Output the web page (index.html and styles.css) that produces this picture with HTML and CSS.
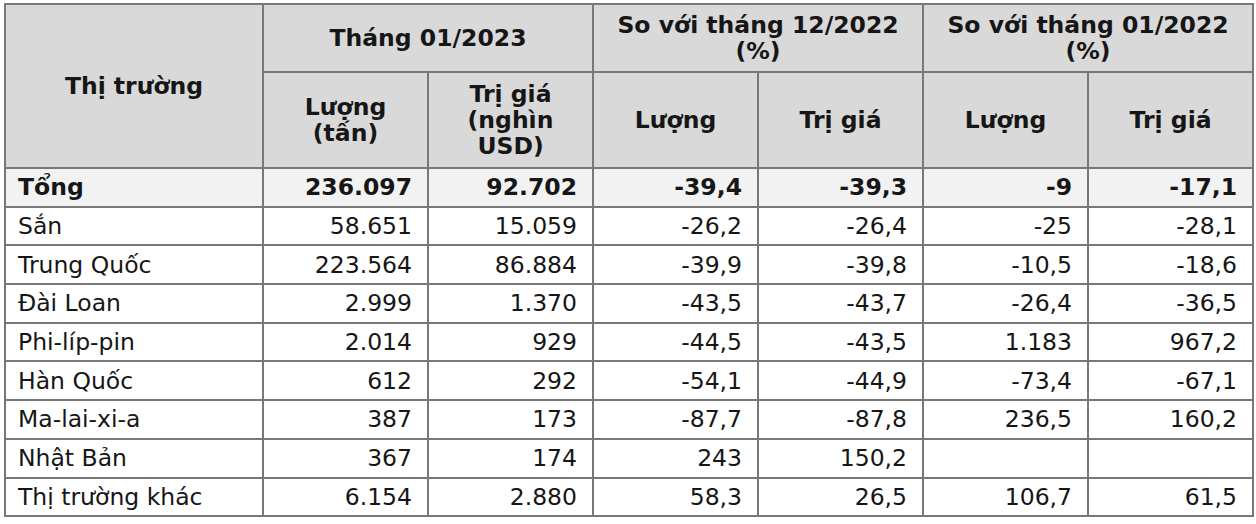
FILE: index.html
```html
<!DOCTYPE html>
<html lang="vi">
<head>
  <meta charset="UTF-8" />
  <meta name="viewport" content="width=device-width, initial-scale=1.0" />
  <title>Thị trường xuất khẩu sắn</title>
  <link rel="stylesheet" href="styles.css">
</head>
<body>
  <div class="wrap">
    <table class="trade">
      <colgroup>
        <col class="c-name">
        <col class="c-num">
        <col class="c-num">
        <col class="c-num">
        <col class="c-num">
        <col class="c-num">
        <col class="c-last">
      </colgroup>
      <thead>
        <tr class="head-top">
          <th rowspan="2">Thị trường</th>
          <th colspan="2">Tháng 01/2023</th>
          <th colspan="2">So với tháng 12/2022<br>(%)</th>
          <th colspan="2">So với tháng 01/2022<br>(%)</th>
        </tr>
        <tr class="head-sub">
          <th>Lượng<br>(tấn)</th>
          <th>Trị giá<br>(nghìn<br>USD)</th>
          <th>Lượng</th>
          <th>Trị giá</th>
          <th>Lượng</th>
          <th>Trị giá</th>
        </tr>
      </thead>
      <tbody>
        <tr class="total">
          <td>Tổng</td><td>236.097</td><td>92.702</td><td>-39,4</td><td>-39,3</td><td>-9</td><td>-17,1</td>
        </tr>
        <tr>
          <td>Sắn</td><td>58.651</td><td>15.059</td><td>-26,2</td><td>-26,4</td><td>-25</td><td>-28,1</td>
        </tr>
        <tr>
          <td>Trung Quốc</td><td>223.564</td><td>86.884</td><td>-39,9</td><td>-39,8</td><td>-10,5</td><td>-18,6</td>
        </tr>
        <tr>
          <td>Đài Loan</td><td>2.999</td><td>1.370</td><td>-43,5</td><td>-43,7</td><td>-26,4</td><td>-36,5</td>
        </tr>
        <tr>
          <td>Phi-líp-pin</td><td>2.014</td><td>929</td><td>-44,5</td><td>-43,5</td><td>1.183</td><td>967,2</td>
        </tr>
        <tr>
          <td>Hàn Quốc</td><td>612</td><td>292</td><td>-54,1</td><td>-44,9</td><td>-73,4</td><td>-67,1</td>
        </tr>
        <tr>
          <td>Ma-lai-xi-a</td><td>387</td><td>173</td><td>-87,7</td><td>-87,8</td><td>236,5</td><td>160,2</td>
        </tr>
        <tr>
          <td>Nhật Bản</td><td>367</td><td>174</td><td>243</td><td>150,2</td><td></td><td></td>
        </tr>
        <tr>
          <td>Thị trường khác</td><td>6.154</td><td>2.880</td><td>58,3</td><td>26,5</td><td>106,7</td><td>61,5</td>
        </tr>
      </tbody>
    </table>
  </div>
</body>
</html>
```

FILE: styles.css
```css
body {
  margin: 0;
  background: #ffffff;
  font-family: "DejaVu Sans", Verdana, sans-serif;
  color: #161616;
}
.wrap {
  padding: 3px 4px;
}
.trade {
  width: 1248px;
  table-layout: fixed;
  border-collapse: collapse;
  font-size: 23.5px;
}
.c-name { width: 258px; }
.c-num { width: 165px; }
.c-last { width: 165px; }

.trade th,
.trade td {
  border: 2px solid #787878;
}
.trade th {
  background: #d9d9d9;
  font-weight: bold;
  line-height: 26px;
  text-align: center;
  vertical-align: middle;
  padding: 0 4px;
}
.head-top { height: 68px; }
.head-sub { height: 96px; }

.trade td {
  height: 38.7px;
  padding: 0 15px 0 12px;
  text-align: right;
  line-height: 26px;
  box-sizing: border-box;
}
.trade td:first-child {
  text-align: left;
}
.total td {
  background: #f2f2f2;
  font-weight: bold;
}
```
